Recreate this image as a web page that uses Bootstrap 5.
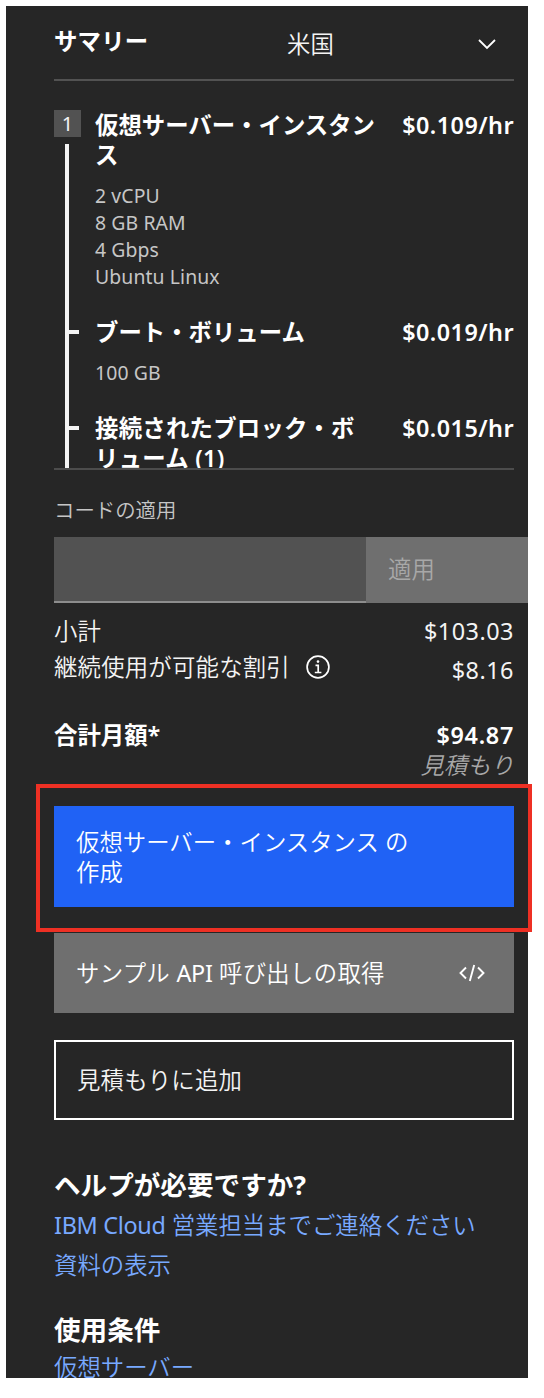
<!DOCTYPE html>
<html lang="ja">
  <head>
    <title>サマリー</title>
    <meta charset="UTF-8" />
    <meta name="viewport" content="width=device-width" />
    <link
      rel="stylesheet"
      href="https://cdn.jsdelivr.net/npm/bootstrap@5.3.3/dist/css/bootstrap.min.css"
      type="text/css"
    />
    <script src="https://cdn.jsdelivr.net/npm/bootstrap@5.3.3/dist/js/bootstrap.bundle.min.js"></script>
    <style>
      body {
        background: #fff;
        color: #f4f4f4;
        font-family: "Noto Sans", "Noto Sans CJK JP", sans-serif;
        font-size: 23.4px;
        line-height: 30px;
        overflow: hidden;
      }
      .panel {
        width: 522px;
        height: 1372px;
        margin: 6px 0 0 6px;
        padding: 0 14px 0 48px;
        background: #262626;
      }
      .thin { font-weight: 350; }
      .latin { font-weight: 400; letter-spacing: -.3px; }
      .strong { font-weight: 600; color: #fff; }
      .summary-head { height: 75px; border-bottom: 2px solid #525252; }
      .summary-title { width: 233px; margin-top: -4px; letter-spacing: .2px; }
      .region { padding-right: 16px; margin-top: 2px; }
      .items { height: 389px; padding-top: 29px; overflow: hidden; border-bottom: 2px solid #4c4c4c; }
      .rail { width: 27px; margin-right: 14px; flex: none; }
      .step { width: 27px; height: 27px; background: #525252; font-size: 20px; line-height: 27px; }
      .rail-line { width: 4px; height: 340px; margin: 7px 0 0 11px; background: #f4f4f4; }
      .item { margin-bottom: 26.4px; }
      .item-name { width: 290px; }
      .item-name-wide { letter-spacing: .25px; }
      .price { letter-spacing: .45px; }
      .tick::before {
        content: "";
        position: absolute;
        left: -26px;
        top: 13px;
        width: 10px;
        height: 4px;
        background: #f4f4f4;
      }
      .details { margin-top: 13.4px; font-size: 19.4px; line-height: 26.7px; color: #c6c6c6; letter-spacing: .1px; }
      .code-label { margin-top: 25px; font-size: 20.4px; color: #c6c6c6; }
      .code-row { height: 66px; margin: 12px -14px 0 0; }
      .code-input { width: 312px; background: #525252; border: 0; border-bottom: 2px solid #8d8d8d; }
      .code-btn { background: #6f6f6f; color: #a8a8a8; padding: 0 0 3px 22px; }
      .totals { padding-top: 13px; }
      .discount { margin-top: 6px; letter-spacing: .2px; }
      .discount .amount { padding-top: 3px; margin-bottom: -3px; }
      .total { margin-top: 38px; }
      .amount { letter-spacing: .7px; }
      .thin .amount { font-weight: 400; letter-spacing: .5px; }
      .estimate { font-style: italic; color: #a8a8a8; }
      .action { padding-left: 22px; border-radius: 0; }
      .create-wrap { margin-top: 26px; }
      .create { height: 101px; background: #2062f5; padding-right: 90px; color: #fff; }
      .highlight { position: absolute; left: -18px; top: -22px; width: 496px; height: 148px; border: 4px solid #ee3024; }
      .sample { height: 80px; margin-top: 26px; padding-right: 28px; background: #6f6f6f; color: #fff; letter-spacing: .3px; }
      .estimate-add { height: 80px; margin-top: 27px; border: 2px solid #fff; padding-left: 21px; letter-spacing: .2px; }
      .help { margin-top: 47px; }
      .help-title { font-size: 26.6px; line-height: 36px; margin-bottom: 2px; font-weight: 700; color: #fff; }
      .terms-title { margin: 27px 0 0; }
      .blue-link { color: #78a9ff; text-decoration: none; display: block; height: 40px; line-height: 40px; }
      .cut { height: 30px; line-height: 38px; overflow: hidden; }
    </style>
  </head>
  <body>
    <main class="panel">
      <header class="summary-head d-flex align-items-center">
        <div class="summary-title strong">サマリー</div>
        <div class="region thin d-flex flex-fill justify-content-between align-items-center">
          <span>米国</span>
          <svg width="22" height="22" viewBox="0 0 22 22" fill="none" stroke="#fff" stroke-width="1.8"><path d="M3 7l8 8 8-8" /></svg>
        </div>
      </header>

      <section class="items d-flex">
        <div class="rail">
          <div class="step text-center">1</div>
          <div class="rail-line"></div>
        </div>
        <div class="flex-fill">
          <div class="item">
            <div class="strong d-flex justify-content-between">
              <div class="item-name">仮想サーバー・インスタンス</div>
              <div class="price">$0.109/hr</div>
            </div>
            <div class="details">2 vCPU<br>8 GB RAM<br>4 Gbps<br>Ubuntu Linux</div>
          </div>
          <div class="item">
            <div class="strong tick position-relative d-flex justify-content-between">
              <div class="item-name">ブート・ボリューム</div>
              <div class="price">$0.019/hr</div>
            </div>
            <div class="details">100 GB</div>
          </div>
          <div class="item">
            <div class="strong tick position-relative d-flex justify-content-between">
              <div class="item-name item-name-wide">接続されたブロック・ボ<br>リューム (1)</div>
              <div class="price">$0.015/hr</div>
            </div>
          </div>
        </div>
      </section>

      <section>
        <div class="code-label thin">コードの適用</div>
        <div class="code-row d-flex">
          <input class="code-input" type="text" aria-label="コードの適用" />
          <div class="code-btn thin flex-fill d-flex align-items-center">適用</div>
        </div>
      </section>

      <section class="totals">
        <div class="thin d-flex justify-content-between">
          <span>小計</span>
          <span class="amount">$103.03</span>
        </div>
        <div class="discount thin d-flex justify-content-between">
          <span class="d-flex align-items-center">継続使用が可能な割引
            <svg class="ms-3" width="24" height="24" viewBox="0 0 24 24" fill="none" stroke="#fff" stroke-width="1.7">
              <circle cx="12" cy="12" r="10.9" />
              <path d="M9.5 10.3h2.7v7.2M8.8 17.5h6.6" />
              <circle cx="12" cy="6.6" r="1.3" fill="#fff" stroke="none" />
            </svg>
          </span>
          <span class="amount">$8.16</span>
        </div>
        <div class="total strong d-flex justify-content-between">
          <span>合計月額*</span>
          <span class="amount">$94.87</span>
        </div>
        <div class="estimate thin text-end">見積もり</div>
      </section>

      <section>
        <div class="create-wrap position-relative">
          <div class="action create thin d-flex align-items-center">仮想サーバー・インスタンス の作成</div>
          <div class="highlight"></div>
        </div>
        <div class="action sample thin d-flex align-items-center justify-content-between">
          <span>サンプル <span class="latin">API</span> 呼び出しの取得</span>
          <svg width="28" height="22" viewBox="0 0 28 22" fill="none" stroke="#fff" stroke-width="1.9"><path d="M8 5.500L2.500 11 8 16.500M20 5.500l5.500 5.500L20 16.500M16.200 3L11.800 19" /></svg>
        </div>
        <div class="action estimate-add thin d-flex align-items-center">見積もりに追加</div>
      </section>

      <footer class="help">
        <div class="help-title">ヘルプが必要ですか?</div>
        <a class="blue-link thin" href="#"><span class="latin">IBM Cloud</span> 営業担当までご連絡ください</a>
        <a class="blue-link thin" href="#">資料の表示</a>
        <div class="help-title terms-title">使用条件</div>
        <a class="blue-link thin cut" href="#">仮想サーバー</a>
      </footer>
    </main>
  </body>
</html>
